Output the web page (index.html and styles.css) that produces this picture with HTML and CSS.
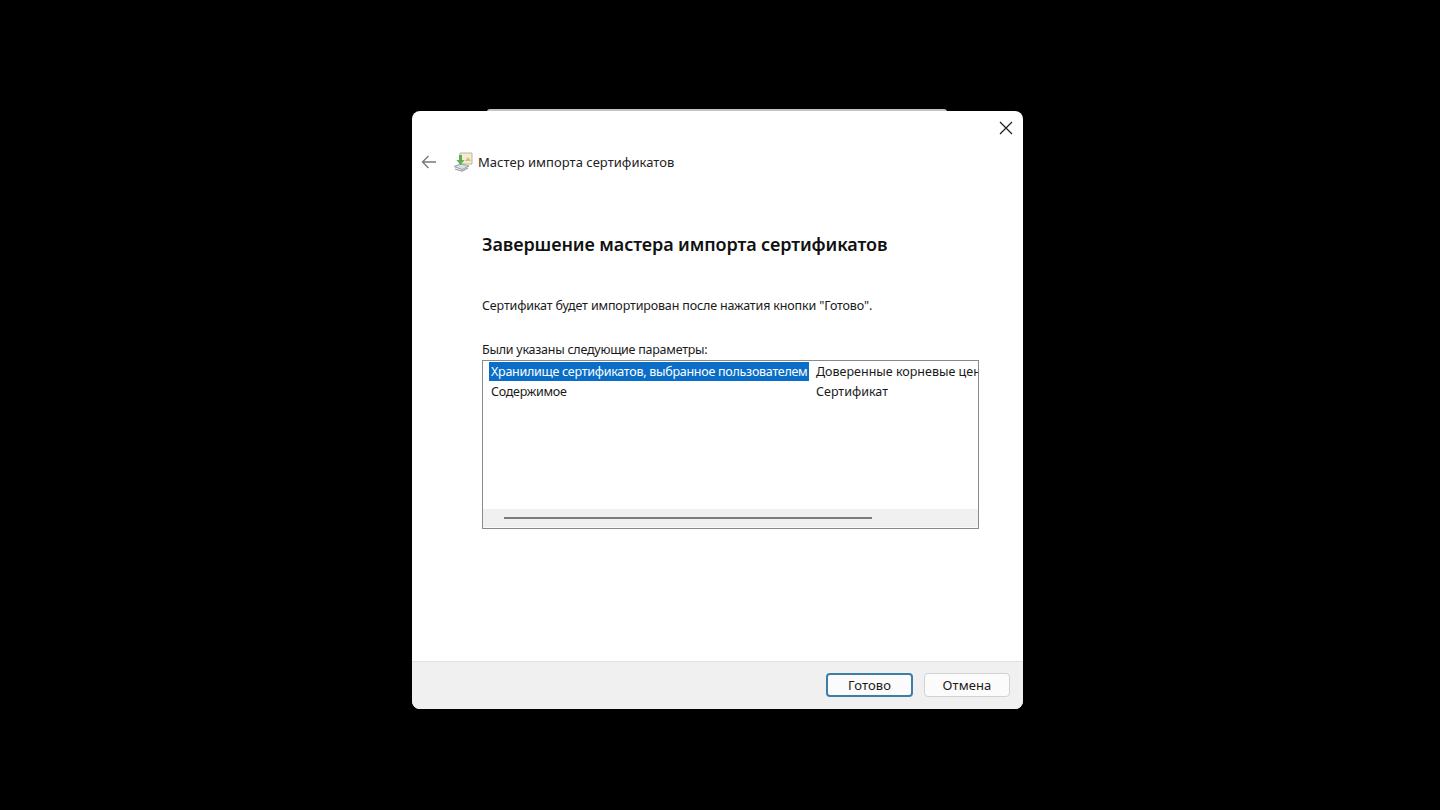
FILE: index.html
```html
<!DOCTYPE html>
<html lang="ru">
<head>
    <meta charset="UTF-8">
    <meta name="viewport" content="width=device-width, initial-scale=1.0">
    <title>Мастер импорта сертификатов</title>
    <link rel="stylesheet" href="styles.css">
</head>
<body>
    <div class="window-behind"></div>
    <div class="dialog">
        <div class="title-bar">
            <button class="close-btn" aria-label="Закрыть">
                <svg width="14" height="14" viewBox="0 0 14 14"><path d="M1 1 13 13M13 1 1 13" stroke="#1c1c1c" stroke-width="1.2" fill="none"/></svg>
            </button>
        </div>

        <div class="wizard-header">
            <svg class="back-icon" width="16" height="14" viewBox="0 0 16 14"><path d="M15 7H1.5M7.5 1 1.5 7l6 6" stroke="#7a7a7a" stroke-width="1.4" fill="none"/></svg>
            <svg class="wizard-icon" width="20" height="20" viewBox="0 0 20 20">
                <path d="M7 1h12v11H7z" fill="#f1ecd2" stroke="#b4b89c" stroke-width="1"/>
                <path d="M12 9l3-4 3 4z" fill="#d9bb78"/>
                <path d="M1 14.5 8 12l8 2-7 3.5z" fill="#dcdfdf" stroke="#9a9fa2" stroke-width="1"/>
                <path d="M2 17l7 2 6-3" fill="none" stroke="#9a9fa2" stroke-width="1.2"/>
                <path d="M6 3h3v5h2.5L7.5 13 3.5 8H6z" fill="#5fae52"/>
            </svg>
            <span class="wizard-name">Мастер импорта сертификатов</span>
        </div>

        <div class="content">
            <h1>Завершение мастера импорта сертификатов</h1>
            <p class="intro">Сертификат будет импортирован после нажатия кнопки "Готово".</p>
            <div class="list-label">Были указаны следующие параметры:</div>
            <div class="list-box">
                <div class="rows">
                    <div class="row">
                        <div class="cell-name selected"><span>Хранилище сертификатов, выбранное пользователем</span></div>
                        <div class="cell-value">Доверенные корневые центры сертификации</div>
                    </div>
                    <div class="row">
                        <div class="cell-name"><span>Содержимое</span></div>
                        <div class="cell-value">Сертификат</div>
                    </div>
                </div>
                <div class="scrollbar"><div class="thumb"></div></div>
            </div>
        </div>

        <div class="footer">
            <button class="btn btn-primary">Готово</button>
            <button class="btn">Отмена</button>
        </div>
    </div>
</body>
</html>
```

FILE: styles.css
```css
* {
    box-sizing: border-box;
    margin: 0;
    padding: 0;
}

html, body {
    height: 810px;
    overflow: hidden;
}

body {
    background-color: #000;
    font-family: "Noto Sans", "Open Sans", sans-serif;
    color: #1a1a1a;
    padding-top: 109px;
}

.window-behind {
    width: 460px;
    height: 3px;
    margin-left: 487px;
    margin-bottom: -1px;
    background-color: #c4c4c4;
    border-radius: 4px 4px 0 0;
}

.dialog {
    width: 611px;
    height: 598px;
    margin-left: 412px;
    background-color: #fff;
    border-radius: 8px;
    overflow: hidden;
    display: flex;
    flex-direction: column;
    position: relative;
}

.title-bar {
    height: 33px;
    display: flex;
    justify-content: flex-end;
    padding: 10px 10px 0 0;
}

.close-btn {
    width: 14px;
    height: 14px;
    background: none;
    border: none;
    display: flex;
}

.wizard-header {
    height: 36px;
    display: flex;
    align-items: center;
    padding-left: 9px;
}

.back-icon {
    margin-right: 16px;
}

.wizard-icon {
    margin-right: 5px;
}

.wizard-name {
    font-size: 13px;
    letter-spacing: 0.03px;
    color: #222;
}

.content {
    flex: 1;
    padding: 0 44px 0 70px;
}

h1 {
    font-size: 18px;
    font-weight: 600;
    line-height: 24px;
    margin-top: 52px;
    color: #111;
    letter-spacing: -0.1px;
}

.intro {
    font-size: 12.5px;
    line-height: 18px;
    margin-top: 41px;
    letter-spacing: -0.15px;
}

.list-label {
    font-size: 12.5px;
    line-height: 18px;
    margin-top: 26px;
    letter-spacing: -0.25px;
}

.list-box {
    width: 497px;
    height: 169px;
    margin-top: 1px;
    border: 1px solid #8a8a8a;
    display: flex;
    flex-direction: column;
    overflow: hidden;
}

.rows {
    flex: 1;
    padding: 1px 0 0 6px;
}

.row {
    display: flex;
    height: 20px;
    font-size: 12.5px;
    line-height: 19px;
    white-space: nowrap;
}

.cell-name {
    width: 320px;
    flex-shrink: 0;
    padding-left: 2px;
    overflow: hidden;
    letter-spacing: -0.27px;
}

.cell-name.selected {
    height: 19px;
    background-color: #0a6ec8;
    color: #fff;
}

.cell-value {
    padding-left: 7px;
    overflow: hidden;
}

.scrollbar {
    height: 19px;
    background-color: #f0f0f0;
    border-bottom: 1px solid #fafafa;
    padding: 8px 0 0 21px;
}

.thumb {
    width: 368px;
    height: 2px;
    background-color: #7c7c7c;
}

.footer {
    height: 48px;
    background-color: #f0f0f0;
    border-top: 1px solid #e0e0e0;
    display: flex;
    justify-content: flex-end;
    gap: 11px;
    padding: 11px 13px 0 0;
}

.btn {
    width: 86px;
    height: 24px;
    background-color: #fbfbfb;
    border: 1px solid #d2d2d2;
    border-radius: 4px;
    font-family: inherit;
    font-size: 13px;
    letter-spacing: 0.1px;
    color: #1a1a1a;
}

.btn-primary {
    width: 87px;
    border: 2px solid #3d7ea6;
}
```
